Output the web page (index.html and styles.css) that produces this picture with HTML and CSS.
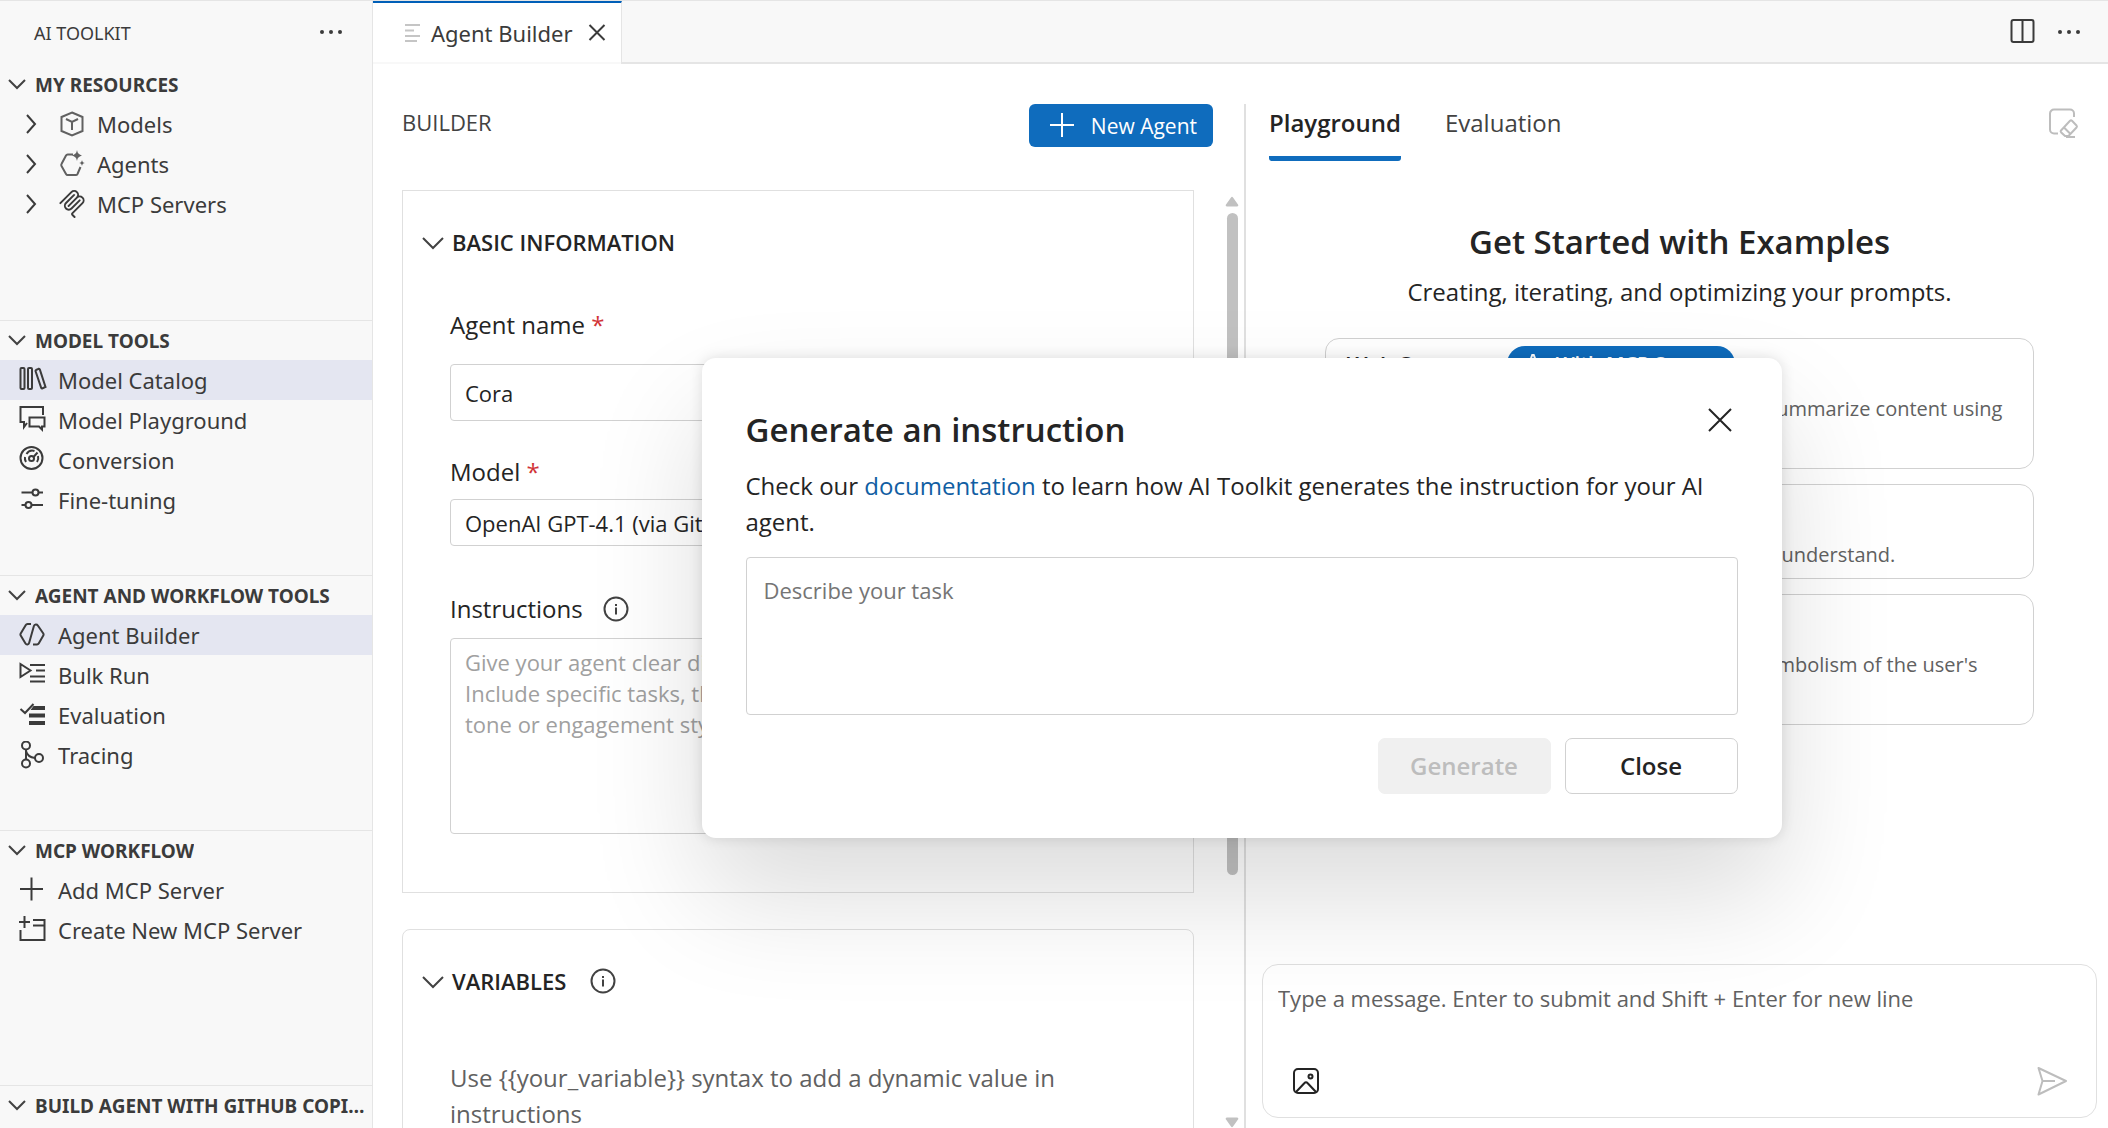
FILE: index.html
```html
<!DOCTYPE html>
<html lang="en">
<head>
<meta charset="utf-8">
<title>AI Toolkit - Agent Builder</title>
<link rel="stylesheet" href="styles.css">
</head>
<body>
<div class="workbench">
  <aside class="sidebar">
    <header class="sidebar-title">
      <h1>AI TOOLKIT</h1>
      <button class="icon-button" type="button" aria-label="Views and more actions">
        <svg class="icon" width="26" height="26" viewBox="0 0 26 26" fill="currentColor"><circle cx="4" cy="12" r="2"/><circle cx="13" cy="12" r="2"/><circle cx="22" cy="12" r="2"/></svg>
      </button>
    </header>

    <section class="pane">
      <h2 class="pane-header"><svg class="chevron" width="18" height="18" viewBox="0 0 18 18"><path d="M1 4l8 8 8-8"/></svg><span>MY RESOURCES</span></h2>
      <ul class="tree">
        <li><a href="#" class="row row-nested">
          <svg class="twistie" width="18" height="24" viewBox="0 0 18 24"><path d="M5 3l8 9-8 9"/></svg>
          <svg class="icon dim" width="28" height="28" viewBox="0 0 28 28"><path d="M14 2.500L24.500 7v14L14 25.500 3.500 21V7zM8 9l6 3 6-3M14 12v8"/></svg>
          <span>Models</span></a></li>
        <li><a href="#" class="row row-nested">
          <svg class="twistie" width="18" height="24" viewBox="0 0 18 24"><path d="M5 3l8 9-8 9"/></svg>
          <svg class="icon dim" width="28" height="28" viewBox="0 0 28 28"><path d="M15 4.500H10a2 2 0 0 0-2 1L3.500 14a2 2 0 0 0 0 2L8 24a2 2 0 0 0 2 1h7.500a2 2 0 0 0 2-1l3-7"/><path class="solid" d="M19 0c.8 3.500 1.500 4.200 5 5.500-3.500 1.300-4.200 2-5 5.500-.8-3.500-1.500-4.200-5-5.500 3.500-1.300 4.200-2 5-5.500zM24 10c.4 2 1 2.600 3 3-2 .4-2.600 1-3 3-.4-2-1-2.600-3-3 2-.4 2.600-1 3-3z"/></svg>
          <span>Agents</span></a></li>
        <li><a href="#" class="row row-nested">
          <svg class="twistie" width="18" height="24" viewBox="0 0 18 24"><path d="M5 3l8 9-8 9"/></svg>
          <svg width="28" height="28" viewBox="0 0 24 24" fill="currentColor"><path d="M13.850 0a4.160 4.160 0 0 0-2.950 1.217L1.456 10.660a.835.835 0 0 0 0 1.180.835.835 0 0 0 1.180 0l9.442-9.442a2.490 2.490 0 0 1 3.541 0 2.490 2.490 0 0 1 0 3.541L8.590 12.970l-.1.1a.835.835 0 0 0 0 1.180.835.835 0 0 0 1.180 0l.1-.098 7.030-7.034a2.490 2.490 0 0 1 3.542 0l.049.05a2.490 2.490 0 0 1 0 3.540l-8.540 8.540a1.960 1.960 0 0 0 0 2.755l1.753 1.753a.835.835 0 0 0 1.180 0 .835.835 0 0 0 0-1.180l-1.753-1.753a.266.266 0 0 1 0-.394l8.540-8.540a4.185 4.185 0 0 0 0-5.900l-.05-.05a4.160 4.160 0 0 0-2.950-1.218c-.2 0-.401.02-.6.048a4.170 4.170 0 0 0-1.170-3.552A4.160 4.160 0 0 0 13.850 0m0 3.333a.84.84 0 0 0-.59.245L6.275 10.560a4.186 4.186 0 0 0 0 5.902 4.186 4.186 0 0 0 5.902 0L19.160 9.480a.835.835 0 0 0 0-1.180.835.835 0 0 0-1.180 0l-6.985 6.984a2.490 2.490 0 0 1-3.540 0 2.490 2.490 0 0 1 0-3.540l6.983-6.985a.835.835 0 0 0 0-1.180.84.84 0 0 0-.59-.245"/></svg>
          <span>MCP Servers</span></a></li>
      </ul>
    </section>

    <section class="pane">
      <h2 class="pane-header"><svg class="chevron" width="18" height="18" viewBox="0 0 18 18"><path d="M1 4l8 8 8-8"/></svg><span>MODEL TOOLS</span></h2>
      <ul class="tree">
        <li><a href="#" class="row selected">
          <svg class="icon" width="28" height="28" viewBox="0 0 28 28"><rect x="1.500" y="2" width="4" height="21" rx="1"/><rect x="9" y="2" width="4" height="21" rx="1"/><path d="M17 4l2.500-1.200a1 1 0 0 1 1.300.6L26.500 21l-3.300 1.500a1 1 0 0 1-1-.6L16.500 5a1 1 0 0 1 .5-1z"/></svg>
          <span>Model Catalog</span></a></li>
        <li><a href="#" class="row">
          <svg class="icon" width="28" height="28" viewBox="0 0 28 28"><path d="M24 9V1H1.500v15H5v5l3-4M10.500 11.500h15v9H23v3l-3-3h-9.500z"/></svg>
          <span>Model Playground</span></a></li>
        <li><a href="#" class="row">
          <svg class="icon" width="28" height="28" viewBox="0 0 28 28"><circle cx="12.500" cy="12" r="11"/><circle cx="12.500" cy="12.500" r="2.500"/><path d="M14.500 11l4-4.500M7 16a7 7 0 0 1-1-5M7.500 8a7 7 0 0 1 8-3M19 10a7 7 0 0 1-1 6"/></svg>
          <span>Conversion</span></a></li>
        <li><a href="#" class="row">
          <svg class="icon" width="28" height="28" viewBox="0 0 28 28"><path d="M2.500 6.500h11M20 6.500h4M2.500 19h4M13 19h11"/><circle cx="16.500" cy="6.500" r="3"/><circle cx="9.500" cy="19" r="3"/></svg>
          <span>Fine-tuning</span></a></li>
      </ul>
    </section>

    <section class="pane">
      <h2 class="pane-header"><svg class="chevron" width="18" height="18" viewBox="0 0 18 18"><path d="M1 4l8 8 8-8"/></svg><span>AGENT AND WORKFLOW TOOLS</span></h2>
      <ul class="tree">
        <li><a href="#" class="row selected">
          <svg class="icon" width="28" height="28" viewBox="0 0 28 28"><path d="M12 3H8.500a2 2 0 0 0-1.700 1L1.700 12.500a2 2 0 0 0 0 2L6.500 22.500a2 2 0 0 0 3.600-.5L14.900 5a2.200 2.200 0 0 1 3.900-.5l5.500 8a2 2 0 0 1 0 2L19.700 22.500a2 2 0 0 1-1.700 1H14"/></svg>
          <span>Agent Builder</span></a></li>
        <li><a href="#" class="row">
          <svg class="icon" width="28" height="28" viewBox="0 0 28 28"><path d="M1.500 3v13L11.500 9.500zM11 4h15M17 9.500h9M11 15.500h15M11 20.500h15"/></svg>
          <span>Bulk Run</span></a></li>
        <li><a href="#" class="row">
          <svg class="icon" width="28" height="28" viewBox="0 0 28 28"><path d="M1.500 8l4.500 4 8.500-9"/><path class="solid" d="M14.500 5H26v4H11.500zM10 12.500h16v4H10zM10 20h16v4H10z"/></svg>
          <span>Evaluation</span></a></li>
        <li><a href="#" class="row">
          <svg class="icon" width="28" height="28" viewBox="0 0 28 28"><circle cx="7" cy="4.500" r="4"/><circle cx="7" cy="22.500" r="4"/><circle cx="20" cy="17" r="4"/><path d="M7 8.500v10M7 10c1 4 4 6.500 9 7"/></svg>
          <span>Tracing</span></a></li>
      </ul>
    </section>

    <section class="pane">
      <h2 class="pane-header"><svg class="chevron" width="18" height="18" viewBox="0 0 18 18"><path d="M1 4l8 8 8-8"/></svg><span>MCP WORKFLOW</span></h2>
      <ul class="tree">
        <li><a href="#" class="row">
          <svg class="icon" width="28" height="28" viewBox="0 0 28 28"><path d="M12.500 1.500v23M1 13h23"/></svg>
          <span>Add MCP Server</span></a></li>
        <li><a href="#" class="row">
          <svg class="icon" width="28" height="28" viewBox="0 0 28 28"><path d="M5.500 0v12M0 6h11M14 4h11.500v20h-24V14M14 9.500h11.500"/></svg>
          <span>Create New MCP Server</span></a></li>
      </ul>
    </section>

    <section class="pane">
      <h2 class="pane-header"><svg class="chevron" width="18" height="18" viewBox="0 0 18 18"><path d="M1 4l8 8 8-8"/></svg><span>BUILD AGENT WITH GITHUB COPILOT</span></h2>
    </section>
  </aside>

  <main class="editor">
    <div class="tab-bar">
      <div class="editor-tab">
        <svg width="16" height="20" viewBox="0 0 16 20" stroke="#c5c5c5" stroke-width="2"><path d="M0 2h15M0 7.500h9M0 13h15M0 18h12"/></svg>
        <span>Agent Builder</span>
        <button class="icon-button" type="button" aria-label="Close tab">
          <svg class="icon" width="18" height="18" viewBox="0 0 18 18"><path d="M1.500 1l15 15M16.500 1l-15 15"/></svg>
        </button>
      </div>
      <div class="editor-actions">
        <button class="icon-button" type="button" aria-label="Split editor">
          <svg class="icon" width="26" height="26" viewBox="0 0 26 26"><rect x="1.500" y="2" width="22" height="22" rx="2"/><path d="M12.500 2v22"/></svg>
        </button>
        <button class="icon-button" type="button" aria-label="More actions">
          <svg class="icon" width="26" height="26" viewBox="0 0 26 26" fill="currentColor"><circle cx="4" cy="14" r="2"/><circle cx="13" cy="14" r="2"/><circle cx="22" cy="14" r="2"/></svg>
        </button>
      </div>
    </div>

    <div class="webview">
      <section class="builder">
        <header class="builder-header">
          <h2>BUILDER</h2>
          <button class="primary-button" type="button">
            <svg width="26" height="26" viewBox="0 0 26 26" fill="none" stroke="#fff" stroke-width="2"><path d="M13 0v24M1 12h24"/></svg>
            New Agent
          </button>
        </header>
        <div class="builder-scroll">
          <div class="cards">
            <article class="card">
              <h3 class="card-header"><svg class="chevron" width="24" height="24" viewBox="0 0 24 24"><path d="M2 8l10 10L22 8"/></svg>BASIC INFORMATION</h3>
              <div class="card-body">
                <div class="field">
                  <label for="agent-name">Agent name <span class="required">*</span></label>
                  <input class="control name-input" id="agent-name" type="text" value="Cora">
                </div>
                <div class="field">
                  <label for="model">Model <span class="required">*</span></label>
                  <select class="control model-select" id="model"><option>OpenAI GPT-4.1 (via GitHub)</option></select>
                </div>
                <div class="field field-last">
                  <div class="label-line">
                    <label for="instructions">Instructions</label>
                    <svg class="info" width="26" height="26" viewBox="0 0 26 26"><circle cx="13" cy="13" r="11.500"/><path class="solid" d="M12 8h2v2h-2zM12 11.500h2v7h-2z"/></svg>
                  </div>
                  <textarea class="control instructions" id="instructions" placeholder="Give your agent clear directions on what to do and how.&#10;Include specific tasks, their order, and the expected&#10;tone or engagement style."></textarea>
                </div>
              </div>
            </article>
            <article class="card card-rounded">
              <h3 class="card-header"><svg class="chevron" width="24" height="24" viewBox="0 0 24 24"><path d="M2 8l10 10L22 8"/></svg>VARIABLES
                <svg class="info" width="26" height="26" viewBox="0 0 26 26"><circle cx="13" cy="13" r="11.500"/><path class="solid" d="M12 8h2v2h-2zM12 11.500h2v7h-2z"/></svg></h3>
              <p class="card-hint">Use {{your_variable}} syntax to add a dynamic value in instructions</p>
            </article>
          </div>
          <div class="scrollbar" aria-hidden="true">
            <svg width="14" height="12" viewBox="0 0 14 12" fill="#c1c1c1"><path d="M6 1.500a1.200 1.200 0 0 1 2 0l5 7a1.200 1.200 0 0 1-1 2H2a1.200 1.200 0 0 1-1-2z"/></svg>
            <div class="thumb"></div>
            <svg class="scroll-end" width="14" height="12" viewBox="0 0 14 12" fill="#c1c1c1"><path d="M6 10.500a1.200 1.200 0 0 0 2 0l5-7a1.200 1.200 0 0 0-1-2H2a1.200 1.200 0 0 0-1 2z"/></svg>
          </div>
        </div>
      </section>

      <section class="playground">
        <header class="playground-header">
          <nav class="tabs">
            <a href="#" class="tab active">Playground</a>
            <a href="#" class="tab">Evaluation</a>
          </nav>
          <button class="icon-button clear-button" type="button" aria-label="Clear conversation">
            <svg width="32" height="32" viewBox="0 0 32 32" fill="none" stroke="#bdbdbd" stroke-width="2"><path d="M11 26.500H7a4 4 0 0 1-4-4V6.500a4 4 0 0 1 4-4h16a4 4 0 0 1 4 4V10M14 23.500L23 13.800a1.500 1.500 0 0 1 2 0l4.500 4.700a1.500 1.500 0 0 1 0 2L21.500 29H18l-4-3.800a1.300 1.300 0 0 1 0-1.700zM17 20.500l6.500 6.500M19 30h9"/></svg>
          </button>
        </header>
        <div class="examples">
          <h2>Get Started with Examples</h2>
          <p class="examples-lead">Creating, iterating, and optimizing your prompts.</p>
          <ul class="example-list">
            <li class="example">
              <div class="example-title">Web Scraper
                <span class="pill"><svg width="20" height="20" viewBox="0 0 20 20" fill="none" stroke="#fff" stroke-width="2"><path d="M10 -1l6 16H4z"/></svg>With MCP Server</span></div>
              <p>Fetch web pages with MCP tools, extract and summarize content using Playwright.</p>
            </li>
            <li class="example">
              <div class="example-title">Simplifier</div>
              <p>Explain complex concepts in terms all kids can understand.</p>
            </li>
            <li class="example">
              <div class="example-title">Dream Interpreter</div>
              <p>Interpret the dream and explain the hidden symbolism of the user's experience.</p>
            </li>
          </ul>
        </div>
        <form class="composer">
          <textarea aria-label="Message" placeholder="Type a message. Enter to submit and Shift + Enter for new line"></textarea>
          <div class="composer-actions">
            <button class="icon-button" type="button" aria-label="Attach image">
              <svg width="28" height="28" viewBox="0 0 28 28" fill="none" stroke="#242424" stroke-width="2"><rect x="2" y="2" width="24" height="24" rx="4"/><circle cx="18.500" cy="9.500" r="2"/><path d="M4 25l8.500-9a2 2 0 0 1 3 0L24 25"/></svg>
            </button>
            <button class="icon-button" type="button" aria-label="Send">
              <svg width="32" height="32" viewBox="0 0 32 32" fill="none" stroke="#bdbdbd" stroke-width="2" stroke-linejoin="round"><path d="M2.500 3L30 16 2.500 29.500 6.500 16zM6.500 16H19"/></svg>
            </button>
          </div>
        </form>
      </section>

      <div class="overlay">
        <div class="dialog" role="dialog" aria-labelledby="dialog-title">
          <header class="dialog-header">
            <h2 id="dialog-title">Generate an instruction</h2>
            <button class="icon-button" type="button" aria-label="Close dialog">
              <svg class="icon" width="26" height="26" viewBox="0 0 26 26"><path d="M2 3l22 22M24 3L2 25"/></svg>
            </button>
          </header>
          <p>Check our <a href="#">documentation</a> to learn how AI Toolkit generates the instruction for your AI agent.</p>
          <textarea class="control task" aria-label="Task" placeholder="Describe your task"></textarea>
          <div class="dialog-actions">
            <button class="dialog-button" type="button" disabled>Generate</button>
            <button class="dialog-button" type="button">Close</button>
          </div>
        </div>
      </div>
    </div>
  </main>
</div>
</body>
</html>
```
FILE: styles.css
```css
* { box-sizing: border-box; }

html, body { height: 100%; }

body {
  margin: 0;
  overflow: hidden;
  background: #fff;
  color: #3b3b3b;
  font: 22px/30px "Noto Sans", "Segoe UI", sans-serif;
}

h1, h2, h3, p, ul { margin: 0; padding: 0; font-weight: 400; }
ul { list-style: none; }
a { color: inherit; text-decoration: none; }
svg { display: block; flex: none; }
button, input, select, textarea { font: inherit; color: inherit; }

.icon, .chevron, .twistie, .info {
  stroke: currentColor;
  stroke-width: 2;
}
.icon:not([fill]), .chevron, .twistie, .info { fill: none; }
.icon[fill] { stroke: none; }
.dim { color: #616161; }
.solid { fill: currentColor; stroke: none; }

.icon-button {
  display: flex;
  padding: 0;
  border: 0;
  background: none;
}

.workbench {
  display: grid;
  grid-template-columns: 373px minmax(0, 1fr);
  height: 100%;
  border-top: 1px solid #e5e5e5;
}

/* Side bar */
.sidebar {
  overflow: hidden;
  background: #f8f8f8;
  border-right: 1px solid #e5e5e5;
}
.sidebar-title {
  display: flex;
  align-items: center;
  justify-content: space-between;
  height: 64px;
  padding: 0 28px 0 34px;
}
.sidebar-title h1 { font-size: 18px; }
.pane { min-height: 255px; }
.pane + .pane { border-top: 1px solid #e5e5e5; }
.pane-header {
  display: flex;
  align-items: center;
  gap: 9px;
  height: 39px;
  padding-left: 8px;
  font-size: 19px;
  font-weight: 700;
}
.pane-header span {
  overflow: hidden;
  white-space: nowrap;
  text-overflow: ellipsis;
}
.row {
  display: flex;
  align-items: center;
  gap: 11px;
  height: 40px;
  padding-left: 19px;
}
.row-nested { padding-left: 22px; }
.row-nested .twistie { margin-right: 7px; }
.selected { background: #e4e6f1; }

/* Editor tabs */
.editor {
  display: flex;
  flex-direction: column;
  min-height: 0;
}
.tab-bar {
  display: flex;
  justify-content: space-between;
  height: 63px;
  background: linear-gradient(#e5e5e5, #e5e5e5) bottom / 100% 2px no-repeat #f8f8f8;
}
.editor-tab {
  display: flex;
  align-items: center;
  gap: 10px;
  padding: 0 15px 2px 32px;
  background: linear-gradient(#f8f8f8, #f8f8f8) bottom / 100% 2px no-repeat #fff;
  border-top: 2px solid #005fb8;
  border-right: 1px solid #e5e5e5;
}
.editor-tab .icon-button { margin-left: 5px; }
.editor-actions {
  display: flex;
  align-items: center;
  gap: 20px;
  padding: 0 26px 4px 0;
}

.webview {
  position: relative;
  display: grid;
  grid-template-columns: minmax(0, 871fr) minmax(0, 864fr);
  flex: 1;
  min-height: 0;
  padding-top: 40px;
  color: #242424;
  font-family: "Open Sans", "Segoe UI", sans-serif;
}

/* Builder */
.builder {
  display: flex;
  flex-direction: column;
  min-height: 0;
  padding-left: 29px;
}
.builder-header {
  display: flex;
  align-items: center;
  justify-content: space-between;
  margin-bottom: 43px;
  padding-right: 31px;
}
.builder-header h2 {
  margin-bottom: 8px;
  color: #424242;
  font-size: 22px;
  font-weight: 500;
}
.primary-button {
  display: flex;
  align-items: center;
  gap: 16px;
  height: 43px;
  padding: 0 16px 0 20px;
  border: 0;
  border-radius: 6px;
  background: #0f6cbd;
  color: #fff;
  font-size: 21px;
  font-weight: 500;
}
.builder-scroll {
  display: flex;
  flex: 1;
  gap: 31px;
  min-height: 0;
  padding-right: 5px;
}
.cards {
  flex: 1;
  min-width: 0;
  overflow: hidden;
}
.card {
  margin-bottom: 36px;
  padding-top: 33px;
  border: 1px solid #e0e0e0;
}
.card-rounded { border-radius: 8px; }
.card-header {
  display: flex;
  align-items: center;
  gap: 7px;
  padding-left: 18px;
  font-size: 22px;
  font-weight: 600;
  line-height: 36px;
}
.card-header .info { margin-left: 17px; }
.chevron, .info { color: #424242; }
.card-body, .card-hint { padding: 0 47px; }
.card-body { padding-bottom: 58px; }
.card-body .field:first-child { margin-top: 47px; }
.card-hint {
  padding-bottom: 46px;
  margin-top: 61px;
  color: #616161;
  font-size: 24px;
  line-height: 36px;
}
.field {
  display: flex;
  flex-direction: column;
  margin-bottom: 33px;
  font-size: 24px;
  line-height: 36px;
}
.field-last { margin: 45px 0 0; }
.label-line {
  display: flex;
  align-items: center;
  gap: 20px;
}
.required { color: #d13438; }
.control {
  width: 100%;
  border: 1px solid #d1d1d1;
  border-radius: 4px;
  background: #fff;
  font-size: 22px;
}
.name-input {
  height: 57px;
  margin-top: 21px;
  padding: 0 14px;
}
.model-select {
  height: 47px;
  margin-top: 9px;
  padding: 0 14px;
  appearance: none;
}
.instructions {
  height: 196px;
  margin-top: 11px;
  padding: 8px 14px;
  line-height: 31px;
  resize: none;
}
::placeholder { color: #757575; opacity: 1; }
.instructions::placeholder { color: #a0a0a0; }

.scrollbar {
  display: flex;
  flex-direction: column;
  align-items: center;
  width: 14px;
  padding-top: 6px;
}
.thumb {
  flex: 0 0 71%;
  width: 11px;
  margin-top: 5px;
  border-radius: 6px;
  background: #c1c1c1;
}
.scroll-end { margin-top: auto; }

/* Playground */
.playground {
  display: flex;
  flex-direction: column;
  padding: 0 11px 10px 16px;
  border-left: 2px solid #e0e0e0;
}
.playground-header {
  display: flex;
  align-items: flex-start;
  justify-content: space-between;
  padding: 0 18px 0 7px;
}
.tabs { display: flex; gap: 44px; }
.tab {
  padding-bottom: 15px;
  border-bottom: 5px solid transparent;
  color: #424242;
  font-size: 24px;
  line-height: 37px;
}
.active {
  color: #242424;
  font-weight: 600;
  background: linear-gradient(#0f6cbd, #0f6cbd) bottom / 100% 5px no-repeat border-box;
  border-radius: 3px;
}
.clear-button { margin-top: 3px; }
.examples {
  width: 85%;
  margin: 57px auto auto;
  text-align: center;
}
.examples h2, .dialog h2 {
  font-size: 33px;
  font-weight: 600;
  line-height: 48px;
}
.examples-lead {
  margin: 8px 0 28px;
  font-size: 24px;
  line-height: 36px;
}
.example-list {
  display: grid;
  gap: 15px;
  text-align: left;
}
.example {
  padding: 8px 21px 5px;
  border: 1px solid #d1d1d1;
  border-radius: 14px;
}
.example-title {
  display: flex;
  align-items: center;
  gap: 26px;
  height: 34px;
  font-weight: 600;
}
.pill {
  display: flex;
  align-items: center;
  gap: 13px;
  height: 36px;
  padding: 0 18px 0 16px;
  border-radius: 18px;
  background: #0f6cbd;
  color: #fff;
  font-size: 20px;
}
.example p {
  padding-top: 10px;
  color: #616161;
  font-size: 20px;
  line-height: 36px;
}

.composer {
  padding: 18px 14px 20px 15px;
  border: 1px solid #e0e0e0;
  border-radius: 16px;
  background: #fff;
}
.composer textarea {
  display: block;
  width: 100%;
  height: 82px;
  padding: 0;
  border: 0;
  background: none;
  resize: none;
}
.composer textarea::placeholder { color: #616161; }
.composer-actions {
  display: flex;
  align-items: center;
  justify-content: space-between;
  padding: 0 14px;
}

/* Dialog */
.overlay {
  position: absolute;
  inset: 0;
  display: grid;
  place-items: center;
  padding: 4px 0 0 2px;
}
.dialog {
  width: 1080px;
  max-width: 100%;
  padding: 44px;
  border-radius: 14px;
  background: #fff;
  box-shadow: 0 0 14px rgba(0, 0, 0, .12), 0 58px 115px rgba(0, 0, 0, .14);
}
.dialog-header {
  display: flex;
  align-items: flex-start;
  justify-content: space-between;
  padding: 4px 5px 14px 0;
}
.dialog p { font-size: 24px; line-height: 36px; }
.dialog a { color: #115ea3; }
.task {
  display: block;
  height: 158px;
  margin: 17px 0 23px;
  padding: 17px;
  resize: none;
}
.dialog-actions {
  display: flex;
  justify-content: flex-end;
  gap: 14px;
}
.dialog-button {
  width: 173px;
  height: 56px;
  border: 1px solid #d1d1d1;
  border-radius: 7px;
  background: #fff;
  color: #242424;
  font-size: 24px;
  font-weight: 600;
}
.dialog-button:disabled {
  border-color: #f0f0f0;
  background: #f0f0f0;
  color: #bdbdbd;
}
```
